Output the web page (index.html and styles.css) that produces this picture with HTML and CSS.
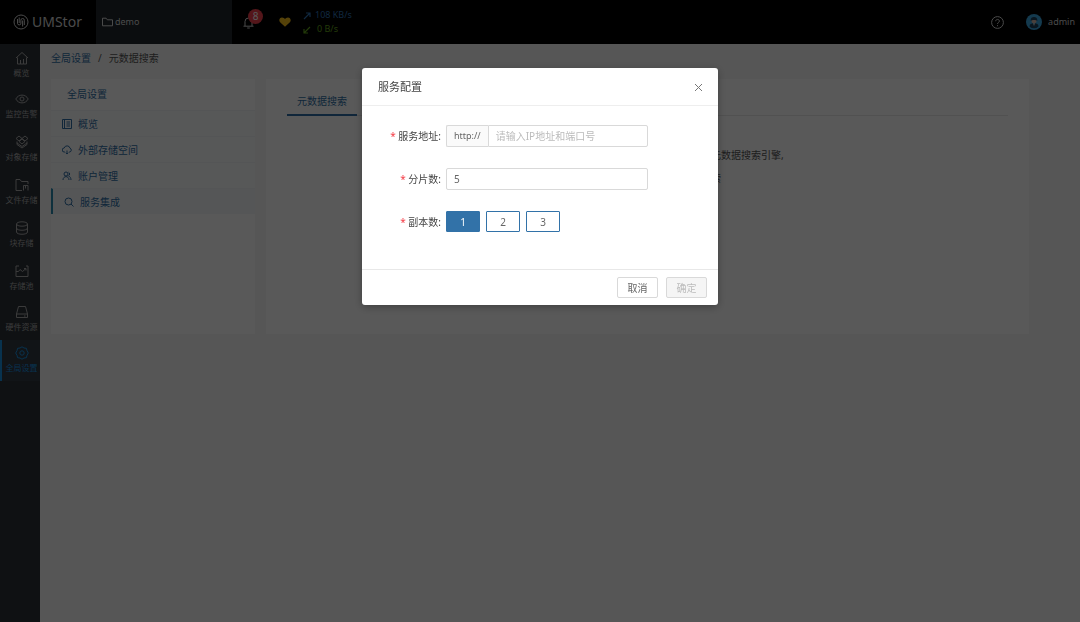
FILE: index.html
```
<!DOCTYPE html>
<html lang="zh-CN">
<head>
    <meta charset="UTF-8">
    <meta name="viewport" content="width=device-width, initial-scale=1.0">
    <title>UMStor</title>
    <link rel="stylesheet" href="styles.css">
</head>

<body>
    <header class="topbar">
        <a class="logo" href="#">
            <svg width="16" height="16" viewBox="0 0 16 16"><circle cx="8" cy="8" r="7"/><path d="M4.500 5v4.200a1.700 1.700 0 0 0 3.400 0V6.200a1.700 1.700 0 0 1 3.400 0V11M6.200 3.500v5.500M9.600 6.500V12.500"/></svg>
            <span>UMStor</span>
        </a>
        <a class="cluster" href="#">
            <svg width="11" height="10" viewBox="0 0 11 10"><path d="M.5 8.800V1.200h3.600l1.200 1.600h5.200v6z"/></svg>
            <span>demo</span>
        </a>
        <button class="bell" aria-label="告警">
            <svg width="11" height="13" viewBox="0 0 11 13"><path d="M2 10V5.500a3.500 3.500 0 0 1 7 0V10M.5 10.200h10M4.200 12h2.600"/></svg>
            <span class="badge">8</span>
        </button>
        <svg class="heart" width="12" height="10" viewBox="0 0 12 10"><path d="M6 9.800 1.100 5.200C-.6 3.300.6.4 3 .4 4.500.4 5.500 1.200 6 2.100 6.500 1.200 7.500.4 9 .4c2.400 0 3.600 2.900 1.900 4.800z"/></svg>
        <div class="rates">
            <div class="up"><svg width="8" height="8" viewBox="0 0 8 8"><path d="M1 7l6-6M3 1h4v4"/></svg>108 KB/s</div>
            <div class="down"><svg width="8" height="8" viewBox="0 0 8 8"><path d="M7 1L1 7M1 3v4h4"/></svg>0 B/s</div>
        </div>
        <button class="help" aria-label="帮助">
            <svg width="13" height="13" viewBox="0 0 13 13"><circle cx="6.500" cy="6.500" r="5.900"/><path d="M4.700 5.200c0-2.400 3.700-2.300 3.700-.1 0 1.400-1.900 1.300-1.900 2.900M6.500 9.200v1"/></svg>
        </button>
        <a class="user" href="#">
            <svg width="16" height="16" viewBox="0 0 16 16"><circle cx="8" cy="8" r="8" fill="#3aa5e0"/><path d="M3.500 12.500c0-2.200 1.500-3.200 4.500-3.200s4.500 1 4.500 3.200A6.400 6.400 0 0 1 3.500 12.500z" fill="#1d4059"/><circle cx="8" cy="6.800" r="2.500" fill="#d8b8a8"/><path d="M4.600 6.800C4.600 4 6 3 8 3s3.400 1 3.400 3.800C10 5.600 6 5.600 4.600 6.800z" fill="#1d4059"/><path d="M7.200 9.300h1.600L8 12z" fill="#fff"/></svg>
            <span>admin</span>
        </a>
    </header>

    <div class="layout">
        <nav class="sidebar">
            <a href="#"><svg viewBox="0 0 14 14"><path d="M1 7l6-5.500L13 7M2.500 6.500V13h3V9M11.500 6.500V13h-3V8M5.500 13h3"/></svg>概览</a>
            <a class="tall" href="#"><svg viewBox="0 0 14 14"><path d="M.8 7C3.500 1.800 10.500 1.800 13.200 7 10.500 12.200 3.500 12.200.8 7z"/><circle cx="7" cy="7" r="2"/></svg>监控告警</a>
            <a class="tall" href="#"><svg viewBox="0 0 14 14"><path d="M4 1l3 2.500L4 6 1 3.500zM10 1l3 2.500L10 6 7 3.500zM7 4l3 2.500L7 9 4 6.500zM2 6.500v3L7 13l5-3.500v-3M2 8l5 3.500L12 8"/></svg>对象存储</a>
            <a class="tall" href="#"><svg viewBox="0 0 14 14"><path d="M7 12.500H1v-11h4l1.500 2H13V6M8.500 12.500v-5H13v5M10.500 7.500v3"/></svg>文件存储</a>
            <a class="tall" href="#"><svg viewBox="0 0 14 14"><ellipse cx="7" cy="3" rx="5.500" ry="2.200"/><path d="M1.500 3v8c0 3 11 3 11 0V3M1.500 7c0 3 11 3 11 0"/></svg>块存储</a>
            <a href="#"><svg viewBox="0 0 14 14"><path d="M4 2H1v10.500h12V2h-2M1 7.500h2.500l1.500-2 2.500 2L11 4.500M9 4.500h2v2"/></svg>存储池</a>
            <a href="#"><svg viewBox="0 0 14 14"><path d="M1.500 9L3.500 1.500h7l2 7.500v3.500h-11zM1.500 9h11M9 11h1.500"/></svg>硬件资源</a>
            <a class="active" href="#"><svg viewBox="0 0 14 14"><path d="M7 .8l2 1.200 2.400.3.600 2.400L13.300 7 12 9.300l-.6 2.400L9 12l-2 1.200L5 12l-2.400-.3L2 9.300.7 7 2 4.700l.6-2.400L5 2z"/><circle cx="7" cy="7" r="2.200"/></svg>全局设置</a>
        </nav>

        <main class="page">
            <div class="breadcrumb">
                <a href="#">全局设置</a><i>/</i><span>元数据搜索</span>
            </div>
            <div class="panels">
                <nav class="submenu">
                    <h2>全局设置</h2>
                    <a href="#"><svg viewBox="0 0 10 10"><path d="M.5.500h9v9h-9zM2.500 .5v9M4.500 3h3.500M4.500 5h3.500M4.500 7h3.500"/></svg>概览</a>
                    <a href="#"><svg viewBox="0 0 10 10"><path d="M3 7H2.200a2 2 0 0 1 0-4A3 3 0 0 1 8 3.200 2 2 0 0 1 7.800 7H7M5 9V5.500M3.700 7.800L5 9l1.300-1.200"/></svg>外部存储空间</a>
                    <a href="#"><svg viewBox="0 0 10 10"><circle cx="4" cy="3" r="2"/><path d="M1 9c0-4.500 6-4.500 6 0M6.500 1.200a2 2 0 0 1 0 3.600C8 5.500 9 7 9 9"/></svg>账户管理</a>
                    <a class="active" href="#"><svg viewBox="0 0 10 10"><circle cx="4.500" cy="4.500" r="3.500"/><path d="M7 7l2.500 2.500"/></svg>服务集成</a>
                </nav>
                <section class="content">
                    <div class="tabs"><a href="#">元数据搜索</a></div>
                    <div class="intro">
                        <p>元数据搜索引擎,</p>
                        <p>索</p>
                    </div>
                </section>
            </div>
        </main>
    </div>

    <div class="mask">
        <form class="modal" role="dialog" aria-labelledby="modal-title">
            <div class="modal-header">
                <h1 id="modal-title">服务配置</h1>
                <button type="button" class="close" aria-label="关闭">
                    <svg width="9" height="9" viewBox="0 0 9 9"><path d="M1 1l7 7M8 1L1 8"/></svg>
                </button>
            </div>
            <div class="modal-body">
                <label for="addr"><b>*</b> 服务地址:</label>
                <div class="group">
                    <span>http://</span>
                    <input type="text" id="addr" placeholder="请输入IP地址和端口号">
                </div>
                <label for="shards"><b>*</b> 分片数:</label>
                <input type="text" id="shards" value="5">
                <label id="copies"><b>*</b> 副本数:</label>
                <div class="copies" role="group" aria-labelledby="copies">
                    <button type="button" class="selected">1</button>
                    <button type="button">2</button>
                    <button type="button">3</button>
                </div>
            </div>
            <div class="modal-footer">
                <button type="button">取消</button>
                <button type="submit" disabled>确定</button>
            </div>
        </form>
    </div>
</body>
</html>
```
FILE: styles.css
```
* {
    box-sizing: border-box;
}

body {
    margin: 0;
    min-height: 100vh;
    display: flex;
    flex-direction: column;
    background: #f7f7f7;
    color: #555;
    font: 10px/16px "Noto Sans", "Noto Sans CJK SC", sans-serif;
}

a {
    color: inherit;
    text-decoration: none;
}

button, input {
    font: inherit;
    color: inherit;
}

h1, h2, p {
    margin: 0;
    font-weight: normal;
}

svg {
    fill: none;
    stroke: currentColor;
    flex: none;
}

/* top bar */
.topbar {
    display: flex;
    align-items: center;
    height: 44px;
    background: #000;
    color: #d5d5d5;
    font-size: 9px;
}

.logo {
    display: flex;
    align-items: center;
    gap: 3px;
    width: 96px;
    padding-left: 13px;
    font-size: 14px;
}

.cluster {
    display: flex;
    align-items: center;
    gap: 2px;
    width: 136px;
    height: 44px;
    padding-left: 6px;
    background: #20252b;
}

.bell, .help, .close {
    display: flex;
    padding: 0;
    border: 0;
    background: none;
}

.bell {
    position: relative;
    margin-left: 11px;
}

.badge {
    position: absolute;
    left: 5px;
    top: -7px;
    width: 15px;
    height: 15px;
    border-radius: 8px;
    background: #f0404c;
    color: #fff;
    font-size: 10px;
    line-height: 15px;
    text-align: center;
}

.heart {
    margin: 0 12px 0 25px;
    fill: #f4bd1c;
    stroke: none;
}

.rates {
    line-height: 14px;
}

.rates svg {
    margin-right: 4px;
    stroke-width: 1.2;
    vertical-align: middle;
}

.up {
    color: #2f72b4;
}

.down {
    color: #63a51c;
}

.down svg {
    margin-right: 6px;
}

.help {
    margin-left: auto;
}

.user {
    display: flex;
    align-items: center;
    gap: 6px;
    padding: 0 5px 0 22px;
}

.user svg {
    stroke: none;
}

.layout {
    display: flex;
    flex: 1;
}

/* left navigation */
.sidebar {
    width: 40px;
    padding-top: 1px;
    background: #2b3138;
    color: #aaa;
    font-size: 8px;
    line-height: 12px;
}

.sidebar a {
    display: flex;
    flex-direction: column;
    align-items: center;
    gap: 2px;
    height: 41px;
    padding: 6px 0 0 3px;
    white-space: nowrap;
}

.sidebar .tall {
    height: 43px;
}

.sidebar svg {
    width: 14px;
    height: 14px;
}

.sidebar .active {
    padding-left: 1px;
    border-left: 2px solid #1890e0;
    background: #313942;
    color: #1890e0;
}

/* page */
.page {
    flex: 1;
    padding: 6px 51px 0 11px;
}

.breadcrumb {
    margin-bottom: 13px;
}

.breadcrumb a, .submenu, .tabs {
    color: #2f6ea5;
}

.breadcrumb i {
    margin: 0 7px;
    font-style: normal;
}

.panels {
    display: flex;
    gap: 11px;
    min-height: 255px;
}

.submenu {
    width: 204px;
    background: #fff;
}

.submenu h2 {
    padding: 7px 16px 8px;
    font-size: 10px;
    line-height: 16px;
}

.submenu a {
    display: flex;
    align-items: center;
    gap: 6px;
    height: 26px;
    padding-left: 11px;
    border-top: 1px solid #f0f3f6;
    background: #fafbfc;
}

.submenu svg {
    width: 10px;
    height: 10px;
}

.submenu .active {
    border-left: 2px solid #2a8ab0;
    background: #f4f7fa;
}

.content {
    flex: 1;
    padding: 10px 21px;
    background: #fff;
}

.tabs {
    display: flex;
    border-bottom: 1px solid #e8e8e8;
}

.tabs a {
    margin-bottom: -1px;
    padding: 4px 10px 5px;
    border-bottom: 2px solid #2f6ea5;
}

.intro {
    padding: 28px 0 0 424px;
    line-height: 23px;
}

/* modal */
.mask {
    position: fixed;
    inset: 0;
    padding-top: 68px;
    background: rgba(0, 0, 0, .65);
}

.modal {
    width: 356px;
    margin: 0 auto;
    border-radius: 3px;
    background: #fff;
    box-shadow: 0 2px 8px rgba(0, 0, 0, .3);
    color: #666;
}

.modal-header {
    display: flex;
    align-items: center;
    justify-content: space-between;
    padding: 10px 15px 9px 16px;
    border-bottom: 1px solid #eee;
}

.modal-header h1 {
    color: #444;
    font-size: 11px;
    line-height: 18px;
}

.close {
    color: #777;
}

.modal-body {
    display: grid;
    grid-template-columns: 63px 202px;
    gap: 21px 5px;
    align-items: center;
    padding: 19px 16px 37px;
}

.modal-body label {
    color: #444;
    text-align: right;
    white-space: nowrap;
}

.modal-body b {
    color: #f5404a;
    font-weight: normal;
}

.modal-body input {
    width: 100%;
    height: 22px;
    padding: 0 7px;
    border: 1px solid #d9d9d9;
    border-radius: 2px;
}

.modal-body input::placeholder {
    color: #bbb;
}

.group {
    display: flex;
}

.group span {
    padding: 2px 7px;
    border: 1px solid #d9d9d9;
    border-right: 0;
    border-radius: 2px 0 0 2px;
    background: #fafafa;
    font-size: 9px;
}

.modal-body .group input {
    flex: 1;
    min-width: 0;
    border-radius: 0 2px 2px 0;
}

.copies {
    display: flex;
    gap: 6px;
}

.copies button {
    width: 34px;
    height: 21px;
    padding: 0;
    border: 1px solid #3272a8;
    border-radius: 1px;
    background: #fff;
}

.copies .selected {
    background: #3272a8;
    color: #fff;
}

.modal-footer {
    display: flex;
    justify-content: flex-end;
    gap: 8px;
    padding: 7px 11px;
    border-top: 1px solid #e8e8e8;
}

.modal-footer button {
    width: 41px;
    height: 21px;
    padding: 0;
    border: 1px solid #d9d9d9;
    border-radius: 2px;
    background: #fff;
}

.modal-footer button:disabled {
    background: #f5f5f5;
    color: #bbb;
}
```
